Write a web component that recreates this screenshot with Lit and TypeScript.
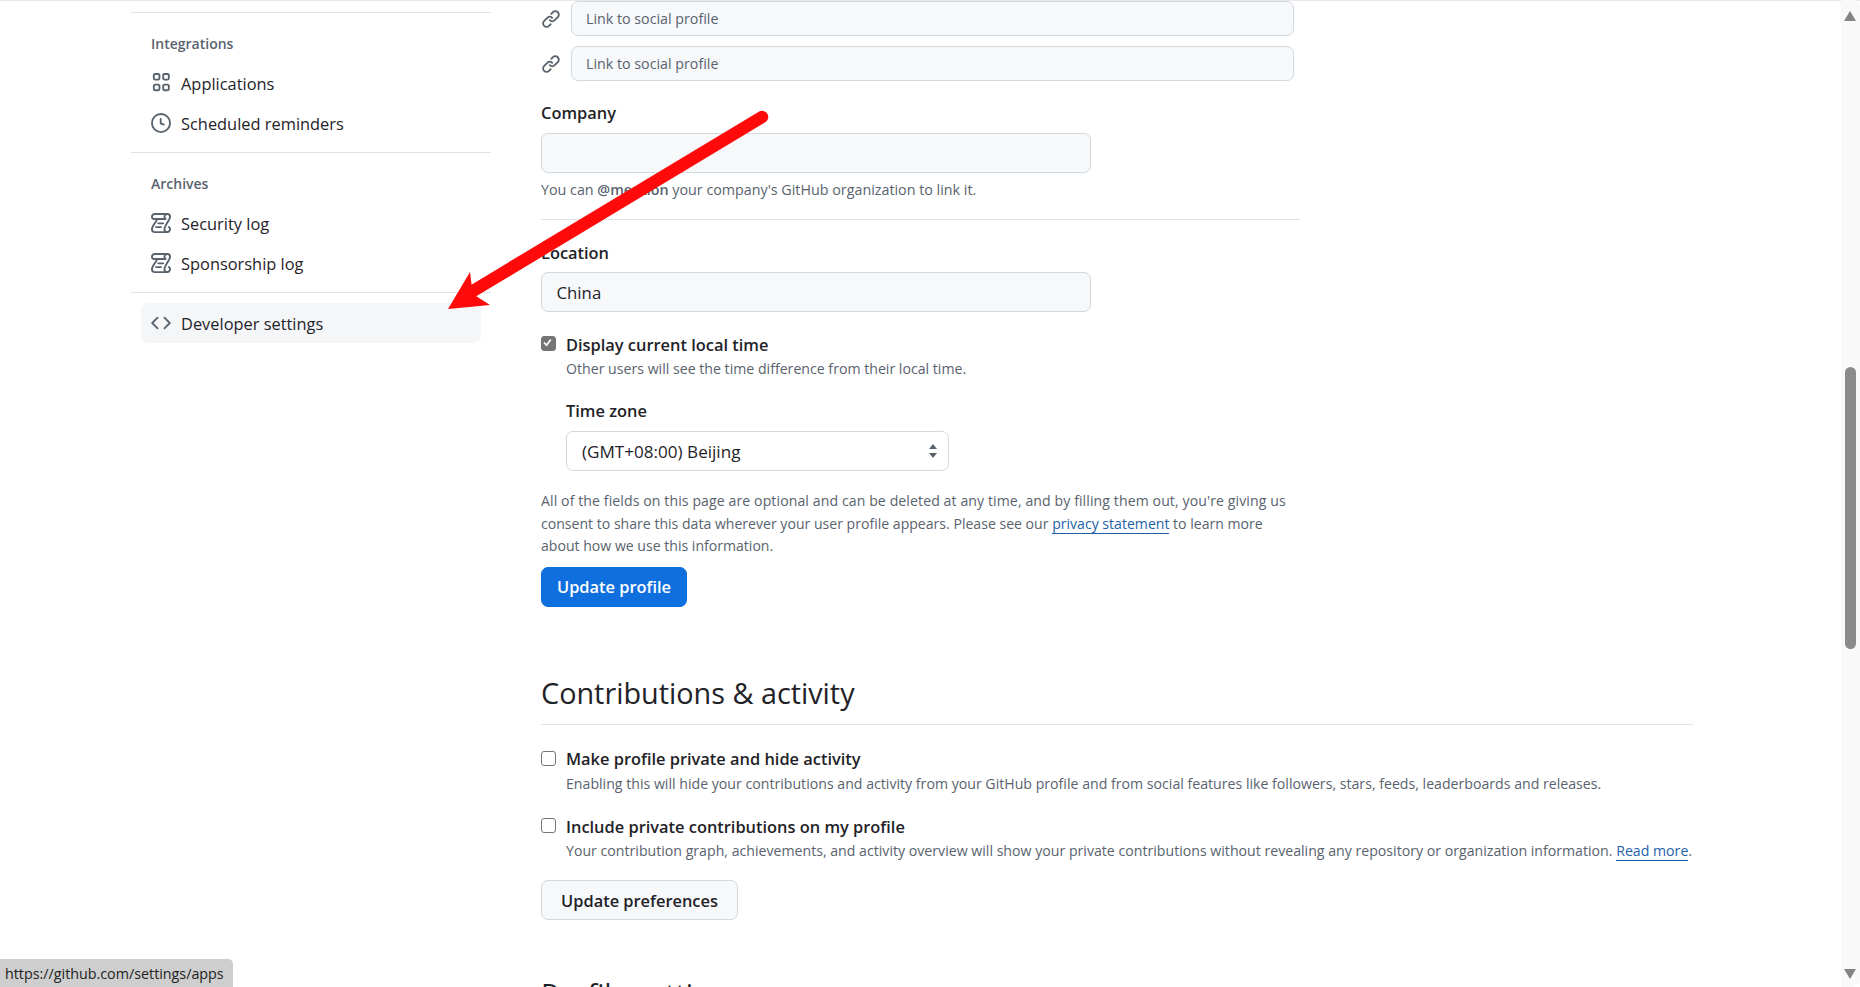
import { LitElement, html, css, svg } from 'lit';
import { customElement } from 'lit/decorators.js';

const octicon = (d: unknown) => html`<svg class="icon" viewBox="0 0 16 16" width="20" height="20" fill="currentColor">${d}</svg>`;

const appsIcon = svg`<path d="M1.5 1.75C1.5.784 2.284 0 3.25 0h2.5C6.716 0 7.5.784 7.5 1.75v2.5C7.5 5.216 6.716 6 5.75 6h-2.5C2.284 6 1.5 5.216 1.5 4.25Zm1.75-.25a.25.25 0 0 0-.25.25v2.5c0 .138.112.25.25.25h2.5A.25.25 0 0 0 6 4.25v-2.5a.25.25 0 0 0-.25-.25ZM1.5 10.25c0-.966.784-1.75 1.75-1.75h2.5c.966 0 1.75.784 1.75 1.75v2.5c0 .966-.784 1.75-1.75 1.75h-2.5c-.966 0-1.75-.784-1.75-1.75Zm1.75-.25a.25.25 0 0 0-.25.25v2.5c0 .138.112.25.25.25h2.5a.25.25 0 0 0 .25-.25v-2.5a.25.25 0 0 0-.25-.25ZM9 1.75C9 .784 9.784 0 10.75 0h2.5c.966 0 1.75.784 1.75 1.75v2.5C15 5.216 14.216 6 13.25 6h-2.5C9.784 6 9 5.216 9 4.25Zm1.75-.25a.25.25 0 0 0-.25.25v2.5c0 .138.112.25.25.25h2.5a.25.25 0 0 0 .25-.25v-2.5a.25.25 0 0 0-.25-.25ZM9 10.25c0-.966.784-1.75 1.75-1.75h2.5c.966 0 1.75.784 1.75 1.75v2.5c0 .966-.784 1.75-1.75 1.75h-2.5C9.784 14.5 9 13.716 9 12.75Zm1.75-.25a.25.25 0 0 0-.25.25v2.5c0 .138.112.25.25.25h2.5a.25.25 0 0 0 .25-.25v-2.5a.25.25 0 0 0-.25-.25Z"/>`;
const clockIcon = svg`<path d="M8 0a8 8 0 1 1 0 16A8 8 0 0 1 8 0ZM1.5 8a6.5 6.5 0 1 0 13 0 6.5 6.5 0 0 0-13 0Zm7-3.25v2.992l2.028.812a.75.75 0 0 1-.557 1.392l-2.5-1A.751.751 0 0 1 7 8.25v-3.5a.75.75 0 0 1 1.5 0Z"/>`;
const logIcon = svg`<g fill="none" stroke="currentColor" stroke-width="1.5" stroke-linecap="round" stroke-linejoin="round">
  <path d="M3 .75h10A2.25 2.25 0 0 1 15.25 3c0 3-4.5 6.5-4.5 10a2.25 2.25 0 0 0 2.25 2.25H3A2.25 2.25 0 0 1 .75 13c0-3 3.5-5.5 4.2-8.25H2.5C1.4 4.75.75 4 .75 3A2.25 2.25 0 0 1 3 .75Z"/>
  <path d="M13 .75A2.25 2.25 0 0 0 10.75 3c0 .8.4 1.4 1 1.75H5"/>
  <path d="M13 15.25a2.25 2.25 0 0 0 1.3-4.05"/>
  <path d="M5.75 8.25h4M4 11.25h4"/>
</g>`;
const codeIcon = svg`<path d="m11.28 3.22 4.25 4.25a.75.75 0 0 1 0 1.06l-4.25 4.25a.749.749 0 0 1-1.275-.326.749.749 0 0 1 .215-.734L13.94 8l-3.72-3.72a.749.749 0 0 1 .326-1.275.749.749 0 0 1 .734.215Zm-6.56 0a.751.751 0 0 1 1.042.018.751.751 0 0 1 .018 1.042L2.06 8l3.72 3.72a.749.749 0 0 1-.326 1.275.749.749 0 0 1-.734-.215L.47 8.53a.75.75 0 0 1 0-1.06Z"/>`;
const linkIcon = svg`<path d="m7.775 3.275 1.25-1.25a3.5 3.5 0 1 1 4.95 4.95l-2.5 2.5a3.5 3.5 0 0 1-4.95 0 .751.751 0 0 1 .018-1.042.751.751 0 0 1 1.042-.018 1.998 1.998 0 0 0 2.83 0l2.5-2.5a2.002 2.002 0 0 0-2.83-2.83l-1.25 1.25a.751.751 0 0 1-1.042-.018.751.751 0 0 1-.018-1.042Zm-4.69 9.64a1.998 1.998 0 0 0 2.83 0l1.25-1.25a.751.751 0 0 1 1.042.018.751.751 0 0 1 .018 1.042l-1.25 1.25a3.5 3.5 0 1 1-4.95-4.95l2.5-2.5a3.5 3.5 0 0 1 4.95 0 .751.751 0 0 1-.018 1.042.751.751 0 0 1-1.042.018 1.998 1.998 0 0 0-2.83 0l-2.5 2.5a1.998 1.998 0 0 0 0 2.83Z"/>`;

@customElement('app-root')
export class AppRoot extends LitElement {
  static styles = css`
    :host {
      display: block;
      position: relative;
      height: 987px;
      overflow: hidden;
      background: #fff;
      color: #1f2328;
      font-family: 'Open Sans', 'Noto Sans', sans-serif;
      font-size: 16.4px;
    }

    .page {
      display: flex;
      height: 987px;
      overflow: hidden;
      padding-left: 131px;
      border-top: 1px solid #e8e8e8;
      box-sizing: border-box;
    }

    .sidebar {
      width: 360px;
      flex: none;
      margin-right: 50px;
      padding-top: 11px;
    }

    .side-group {
      border-top: 1px solid #dfe2e5;
      padding: 12px 0 9px;
    }

    .side-group.last {
      padding-top: 10px;
    }

    .side-title {
      height: 36px;
      margin-bottom: 2px;
      padding-left: 20px;
      display: flex;
      align-items: center;
      font-size: 14px;
      font-weight: 600;
      color: #59636e;
    }

    .side-item {
      height: 40px;
      margin: 0 10px;
      padding-left: 10px;
      display: flex;
      align-items: center;
      gap: 10px;
      border-radius: 7px;
      font-size: 16.4px;
    }

    .side-item.hover {
      background: #f5f6f8;
    }

    .icon {
      flex: none;
      color: #59636e;
      display: block;
    }

    .main {
      width: 1152px;
      flex: none;
    }

    .social {
      display: flex;
      align-items: center;
      gap: 10px;
      width: 753px;
      height: 35px;
      margin-bottom: 10px;
    }

    .social .input {
      flex: 1;
      height: 35px;
      padding-left: 14px;
      font-size: 14.25px;
      color: #59636e;
    }

    .input {
      box-sizing: border-box;
      display: flex;
      align-items: center;
      height: 40px;
      width: 550px;
      padding-left: 14.5px;
      background: #f6f8fa;
      border: 1px solid #d1d9e0;
      border-radius: 7px;
      font-size: 16.8px;
    }

    .label {
      font-weight: 600;
      line-height: 24px;
      height: 24px;
    }

    .note {
      font-size: 14.15px;
      line-height: 20px;
      color: #59636e;
    }

    .note b {
      font-weight: 600;
    }

    .narrow {
      width: 759px;
    }

    .company {
      margin-top: 20px;
    }

    .company .input {
      margin-top: 8px;
    }

    .location .input {
      margin-top: 7px;
    }

    .company .note {
      margin-top: 7px;
      font-size: 14.3px;
    }

    .rule {
      border: 0;
      border-top: 1px solid #dfe2e5;
      margin: 19px 0 21px;
    }

    .check-row {
      display: flex;
      gap: 10px;
    }

    .check-row .note {
      margin-top: 2px;
    }

    .local-time {
      margin-top: 21px;
    }

    .box {
      box-sizing: border-box;
      flex: none;
      width: 15px;
      height: 15px;
      margin-top: 3px;
      border: 1.5px solid #767676;
      border-radius: 3px;
      background: #fff;
    }

    .box.on {
      background: #757575;
      border-color: #757575;
    }

    .box svg {
      display: block;
    }

    .timezone {
      margin: 20px 0 0 25px;
    }

    .select {
      box-sizing: border-box;
      width: 383px;
      height: 40px;
      margin-top: 8px;
      padding: 0 10px 0 15px;
      display: flex;
      align-items: center;
      justify-content: space-between;
      border: 1px solid #d1d9e0;
      border-radius: 7px;
      background: #fff;
      font-size: 17.1px;
    }

    .legal {
      margin-top: 19px;
      font-size: 14.08px;
      line-height: 22.5px;
      width: 752px;
    }

    .legal .wide {
      letter-spacing: 0.1px;
    }

    a {
      color: #1f5fa8;
      text-decoration: none;
      border-bottom: 1px solid #1f5fa8;
    }

    .btn {
      box-sizing: border-box;
      display: flex;
      align-items: center;
      justify-content: center;
      height: 40px;
      font-weight: 600;
      border-radius: 7px;
      border: 1px solid #d1d9e0;
      background: #f6f8fa;
    }

    .btn.primary {
      width: 146px;
      margin-top: 9.5px;
      padding-bottom: 2px;
      background: #0f6fde;
      border-color: #0f6fde;
      color: #fff;
    }

    .btn.secondary {
      width: 197px;
      margin-top: 19px;
    }

    h2 {
      margin: 0;
      font-size: 28.8px;
      font-weight: 400;
      line-height: 38px;
    }

    .section-head {
      margin-top: 67px;
      padding-bottom: 12px;
      border-bottom: 1px solid #dfe2e5;
      width: 1152px;
    }

    .pref {
      margin-top: 22px;
    }

    .pref .box {
      margin-top: 4px;
    }

    .pref .note {
      margin-top: 3px;
    }

    .pref.second {
      margin-top: 21px;
    }

    .pref.second .box {
      margin-top: 3px;
    }

    .pref.second .note {
      margin-top: 2px;
    }

    .next-head {
      margin-top: 55px;
    }

    .scrollbar {
      position: absolute;
      top: 0;
      right: 0;
      bottom: 0;
      width: 19px;
      background: #f9f9f9;
      border-top-right-radius: 8px;
      border-bottom-right-radius: 8px;
    }

    .thumb {
      position: absolute;
      left: 4px;
      top: 367px;
      width: 11px;
      height: 282px;
      border-radius: 6px;
      background: #8b8b8b;
    }

    .arrow {
      position: absolute;
      left: 3px;
      width: 0;
      height: 0;
      border-left: 6.5px solid transparent;
      border-right: 6.5px solid transparent;
    }

    .arrow.up {
      top: 11px;
      border-bottom: 10px solid #848484;
    }

    .arrow.down {
      bottom: 8px;
      border-top: 10px solid #848484;
    }

    .status {
      position: absolute;
      left: 0;
      bottom: 0;
      height: 28px;
      width: 233px;
      box-sizing: border-box;
      padding-left: 5px;
      display: flex;
      align-items: center;
      background: #cecece;
      border-top-right-radius: 5px;
      font-size: 14.3px;
      color: #222;
      white-space: nowrap;
    }

    .pointer {
      position: absolute;
      inset: 0;
      pointer-events: none;
    }
  `;

  private sideItem(icon: unknown, text: string, hover = false) {
    return html`<div class="side-item ${hover ? 'hover' : ''}">${octicon(icon)}<span>${text}</span></div>`;
  }

  private social() {
    return html`<div class="social">${octicon(linkIcon)}<div class="input">Link to social profile</div></div>`;
  }

  render() {
    return html`
      <div class="page">
        <nav class="sidebar">
          <div class="side-group">
            <div class="side-title">Integrations</div>
            ${this.sideItem(appsIcon, 'Applications')}
            ${this.sideItem(clockIcon, 'Scheduled reminders')}
          </div>
          <div class="side-group">
            <div class="side-title">Archives</div>
            ${this.sideItem(logIcon, 'Security log')}
            ${this.sideItem(logIcon, 'Sponsorship log')}
          </div>
          <div class="side-group last">
            ${this.sideItem(codeIcon, 'Developer settings', true)}
          </div>
        </nav>

        <main class="main">
          ${this.social()} ${this.social()}

          <div class="narrow">
            <div class="company">
              <div class="label">Company</div>
              <div class="input"></div>
              <div class="note">You can <b>@mention</b> your company's GitHub organization to link it.</div>
            </div>
            <hr class="rule" />
            <div class="location">
              <div class="label">Location</div>
              <div class="input">China</div>
            </div>
          </div>

          <div class="check-row local-time">
            <div class="box on">
              <svg viewBox="0 0 15 15" width="12" height="12"><path d="M2.5 7l3.2 3.2L11 3" fill="none" stroke="#fff" stroke-width="2.2"/></svg>
            </div>
            <div>
              <div class="label">Display current local time</div>
              <div class="note">Other users will see the time difference from their local time.</div>
            </div>
          </div>

          <div class="timezone">
            <div class="label">Time zone</div>
            <div class="select">
              <span>(GMT+08:00) Beijing</span>
              <svg width="10" height="16" viewBox="0 0 10 16" fill="#59636e"><path d="M5 1l4 5H1zM5 15l4-5H1z"/></svg>
            </div>
          </div>

          <div class="note legal">
            <span class="wide">All of the fields on this page are optional and can be deleted at any time, and by filling them out, you're giving us</span>
            consent to share this data wherever your user profile appears. Please see our <a>privacy statement</a> to learn more
            about how we use this information.
          </div>
          <div class="btn primary">Update profile</div>

          <div class="section-head"><h2>Contributions &amp; activity</h2></div>

          <div class="check-row pref">
            <div class="box"></div>
            <div>
              <div class="label">Make profile private and hide activity</div>
              <div class="note">Enabling this will hide your contributions and activity from your GitHub profile and from social features like followers, stars, feeds, leaderboards and releases.</div>
            </div>
          </div>
          <div class="check-row pref second">
            <div class="box"></div>
            <div>
              <div class="label">Include private contributions on my profile</div>
              <div class="note">Your contribution graph, achievements, and activity overview will show your private contributions without revealing any repository or organization information. <a>Read more</a>.</div>
            </div>
          </div>
          <div class="btn secondary">Update preferences</div>

          <h2 class="next-head">Profile settings</h2>
        </main>
      </div>

      <svg class="pointer" width="1860" height="987" viewBox="0 0 1860 987">
        <path d="M762 117 L468 294" stroke="#fe0a0a" stroke-width="12.5" stroke-linecap="round" fill="none" />
        <path d="M448 309 L470 272 L472 288 L476 296 L490 305 Z" fill="#fe0a0a" />
      </svg>

      <div class="scrollbar">
        <div class="arrow up"></div>
        <div class="thumb"></div>
        <div class="arrow down"></div>
      </div>
      <div class="status">https://github.com/settings/apps</div>
    `;
  }
}
